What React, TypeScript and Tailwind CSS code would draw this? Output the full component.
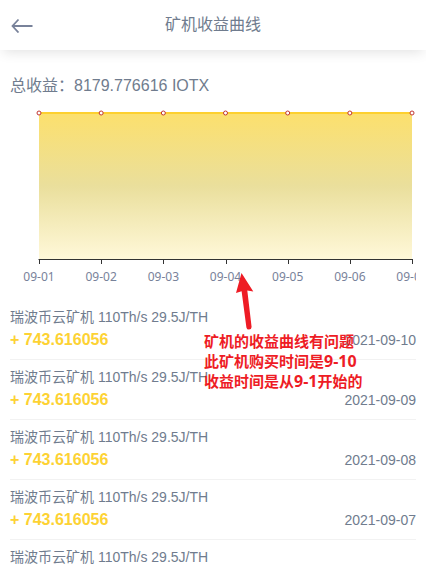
const days = ['09-01', '09-02', '09-03', '09-04', '09-05', '09-06', '09-07'];

const records = [
  { date: '2021-09-10', amount: '743.616056' },
  { date: '2021-09-09', amount: '743.616056' },
  { date: '2021-09-08', amount: '743.616056' },
  { date: '2021-09-07', amount: '743.616056' },
  { date: '2021-09-06', amount: '743.616056' },
];

const firstX = 29;
const stepX = 62.17;

function Header() {
  return (
    <header className="grid h-[50px] shrink-0 grid-cols-[44px_1fr_44px] items-center shadow-[0_5px_12px_-3px_rgba(0,0,0,0.12)]">
      <button type="button" aria-label="返回" className="flex h-full items-center pl-[11px]">
        <svg width="22" height="16" viewBox="0 0 22 16" fill="none" stroke="#78829a" strokeWidth="1.8">
          <path d="M7.5 2.5 L1.5 9 L7.5 15.5 M1.5 9 H21.5" />
        </svg>
      </button>
      <h1 className="text-center text-base">矿机收益曲线</h1>
    </header>
  );
}

function IncomeChart() {
  return (
    <svg viewBox="0 0 406 190" className="block h-auto w-full overflow-hidden" role="img" aria-label="收益曲线">
      <defs>
        <linearGradient id="income" x1="0" y1="0" x2="0" y2="1">
          <stop offset="0" stopColor="#fce06d" />
          <stop offset="0.5" stopColor="#eadf9c" />
          <stop offset="1" stopColor="#fff8d9" />
        </linearGradient>
      </defs>
      <rect x={firstX} y="13" width="373" height="146" fill="url(#income)" />
      <path d="M29 13 H402" stroke="#fdd02f" strokeWidth="2" />
      <path d="M28.5 159.5 H402.5" stroke="#333333" strokeWidth="1" />
      {days.map((day, i) => {
        const x = firstX + i * stepX;
        const tick = Math.round(x) + 0.5;
        return (
          <g key={day}>
            <path d={`M${tick} 159 V164`} stroke="#333333" strokeWidth="1" />
            <circle cx={x} cy="13" r="2" fill="#ffffff" stroke="#c23531" strokeWidth="1" />
            <text x={x} y="181" textAnchor="middle" className="fill-[#78829a] font-['Noto_Sans',sans-serif] text-[12px]">
              {day}
            </text>
          </g>
        );
      })}
    </svg>
  );
}

function Annotation() {
  return (
    <aside className="absolute left-[204px] top-[271px] text-[#ee1c25]">
      <svg width="60" height="60" viewBox="0 0 60 60" className="block">
        <path
          d="M37.5 2 L49.3 20.4 L43.3 19.6 L47.6 56 Q47.4 58.6 45 58.6 Q42.8 58.6 42.4 56.4 L37.6 20.2 L32 22 Z"
          fill="currentColor"
        />
      </svg>
      <p className="whitespace-nowrap font-['Noto_Sans','Noto_Sans_CJK_SC',sans-serif] text-[15px] font-bold leading-5">
        矿机的收益曲线有问题
        <br />
        此矿机购买时间是<span className="text-base leading-5">9-10</span>
        <br />
        收益时间是从<span className="text-base leading-5">9-1</span>开始的
      </p>
    </aside>
  );
}

export default function App() {
  return (
    <div className="relative flex h-screen flex-col overflow-hidden bg-white font-['Liberation_Sans','Noto_Sans_CJK_SC',sans-serif] text-[#707c8e]">
      <Header />
      <main className="px-2.5 pt-6">
        <p className="mb-0.5 text-base leading-6">总收益：8179.776616 IOTX</p>
        <IncomeChart />
        <ul className="pt-2.5">
          {records.map((record) => (
            <li key={record.date} className="border-b border-[#f2f2f2] py-1.5">
              <p className="text-sm leading-[22px]">瑞波币云矿机 110Th/s 29.5J/TH</p>
              <div className="flex items-start justify-between">
                <strong className="text-base leading-[23px] text-[#fdd233]">+ {record.amount}</strong>
                <time className="text-sm leading-[25px]">{record.date}</time>
              </div>
            </li>
          ))}
        </ul>
      </main>
      <Annotation />
    </div>
  );
}
